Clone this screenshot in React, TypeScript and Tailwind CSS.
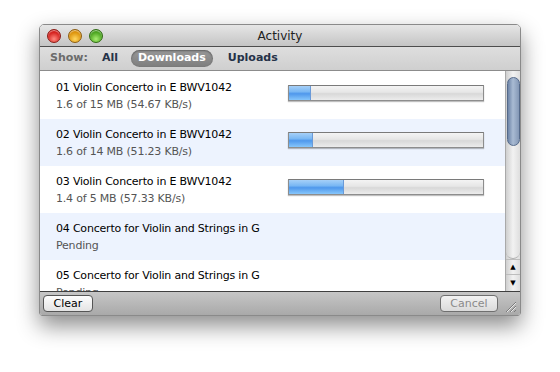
const font = { fontFamily: '"DejaVu Sans", "Liberation Sans", sans-serif' }

type Item = {
  name: string
  status: string
  fill?: number
}

const items: Item[] = [
  { name: '01 Violin Concerto in E BWV1042', status: '1.6 of 15 MB (54.67 KB/s)', fill: 22 },
  { name: '02 Violin Concerto in E BWV1042', status: '1.6 of 14 MB (51.23 KB/s)', fill: 24 },
  { name: '03 Violin Concerto in E BWV1042', status: '1.4 of 5 MB (57.33 KB/s)', fill: 55 },
  { name: '04 Concerto for Violin and Strings in G', status: 'Pending' },
  { name: '05 Concerto for Violin and Strings in G', status: 'Pending' },
]

const Light = ({ from, to, edge }: { from: string; to: string; edge: string }) => (
  <div
    className="w-[14px] h-[14px] rounded-full border"
    style={{
      borderColor: edge,
      background: `radial-gradient(circle at 50% 75%, ${to} 0%, ${from} 70%)`,
      boxShadow: 'inset 0 1px 1px rgba(255,255,255,0.6)',
    }}
  />
)

const Progress = ({ fill }: { fill: number }) => (
  <div className="mt-[13px] w-[196px] h-[16px] border border-[#8d8d8d] border-t-[#7a7a7a] bg-[linear-gradient(#f4f4f4,#e6e6e6_45%,#d8d8d8_55%,#ececec)] shadow-[0_1px_1px_rgba(0,0,0,0.25)] flex">
    <div
      className="h-full border-r border-[#6a9ad8] bg-[linear-gradient(#a6d0f8,#7ab8f4_40%,#4f98ec_55%,#86c6fb)]"
      style={{ width: fill }}
    />
  </div>
)

const Row = ({ item, alt }: { item: Item; alt: boolean }) => (
  <div className={`h-[47px] shrink-0 flex items-start pl-[16px] ${alt ? 'bg-[#edf3fe]' : 'bg-white'}`}>
    <div className="w-[232px] pt-[9px] text-[11px] leading-[14px] tracking-[-0.2px]">
      <div className="text-black whitespace-nowrap">{item.name}</div>
      <div className="mt-[3px] text-[#555] whitespace-nowrap">{item.status}</div>
    </div>
    {item.fill !== undefined && <Progress fill={item.fill} />}
  </div>
)

export default function App() {
  return (
    <div className="w-[560px] h-[372px] bg-white pt-[24px] pl-[39px]" style={font}>
      <div className="w-[482px] h-[292px] flex flex-col rounded-t-[5px] rounded-b-[3px] overflow-hidden border border-[#8a8a8a] shadow-[0_10px_22px_rgba(0,0,0,0.45)]">
        {/* title bar */}
        <div className="h-[22px] shrink-0 flex items-center bg-[linear-gradient(#e6e6e6,#c4c4c4)] border-b border-[#4d4d4d]">
          <div className="w-[64px] pl-[7px] flex gap-[7px]">
            <Light from="#d0120f" to="#ff8a80" edge="#8a1a14" />
            <Light from="#d88a00" to="#ffd760" edge="#8c5d10" />
            <Light from="#3e9a14" to="#a8ee70" edge="#2f6a12" />
          </div>
          <div className="flex-1 text-center text-[12px] text-[#222]">Activity</div>
          <div className="w-[64px]" />
        </div>

        {/* toolbar */}
        <div className="h-[24px] shrink-0 flex items-center pl-[10px] text-[11px] font-bold bg-[linear-gradient(#dedede,#cfcfcf)] border-b border-[#8c8c8c]">
          <span className="text-[#6b6b6b]">Show:</span>
          <span className="ml-[14px] text-[#253248]">All</span>
          <span className="ml-[13px] h-[17px] px-[7px] flex items-center rounded-full bg-[linear-gradient(#999,#7d7d7d)] text-white shadow-[inset_0_1px_2px_rgba(0,0,0,0.4)]">
            Downloads
          </span>
          <span className="ml-[15px] text-[#253248]">Uploads</span>
        </div>

        {/* list */}
        <div className="flex-1 min-h-0 flex">
          <div className="flex-1 flex flex-col overflow-hidden pt-[1px] bg-white">
            {items.map((it, i) => (
              <Row key={it.name} item={it} alt={i % 2 === 1} />
            ))}
          </div>
          <div className="w-[15px] flex flex-col border-l border-[#a9a9a9] bg-[linear-gradient(90deg,#cfcfcf,#f2f2f2_50%,#dedede)]">
            <div className="flex-1 pt-[6px] flex flex-col">
              <div className="mx-auto w-[13px] h-[69px] rounded-full border border-[#556a8a] bg-[linear-gradient(90deg,#6d84a7,#a9bbd3_45%,#8498b6)]" />
              <div className="flex-1" />
              <div className="h-[8px] rounded-b-full border-b border-[#b0b0b0]" />
            </div>
            <div className="h-[16px] flex items-center justify-center border-t border-b border-[#bdbdbd] text-[7px] leading-none">
              ▲
            </div>
            <div className="h-[16px] flex items-center justify-center text-[7px] leading-none">▼</div>
          </div>
        </div>

        {/* bottom bar */}
        <div className="h-[24px] shrink-0 flex items-center pl-[3px] pr-[2px] border-t border-[#3f3f3f] bg-[linear-gradient(#c6c6c6,#a9a9a9)]">
          <button className="w-[50px] h-[17px] rounded-[4px] border border-[#555] bg-[linear-gradient(#fdfdfd,#e4e4e4)] text-[11px] leading-none text-black">
            Clear
          </button>
          <div className="flex-1" />
          <button className="w-[58px] h-[17px] rounded-[4px] border border-[#6f6f6f] bg-[linear-gradient(#f2f2f2,#dadada)] text-[11px] leading-none text-[#8a8a8a]">
            Cancel
          </button>
          <svg width="16" height="16" viewBox="0 0 16 16" className="ml-[4px] mt-[4px]">
            <path d="M4 14 L14 4 M8 14 L14 8 M12 14 L14 12" stroke="#7a7a7a" strokeWidth="1" />
            <path d="M5 14 L14 5 M9 14 L14 9" stroke="#e8e8e8" strokeWidth="1" />
          </svg>
        </div>
      </div>
    </div>
  )
}
